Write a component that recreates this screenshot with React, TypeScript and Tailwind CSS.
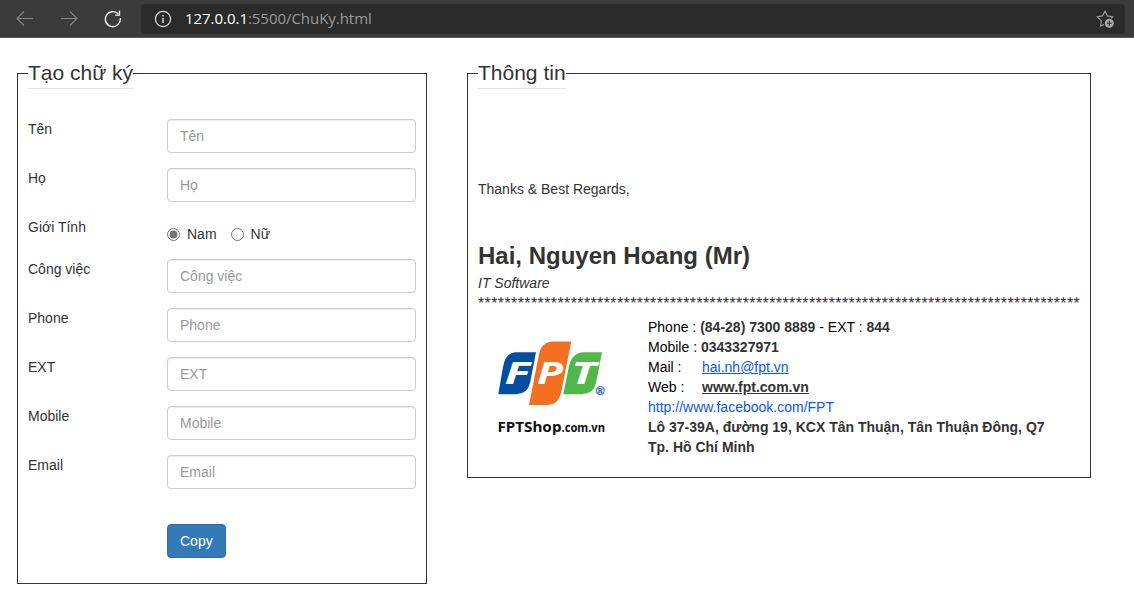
import React from "react";

function BrowserBar() {
  return (
    <header className="flex h-[38px] items-center border-b border-[#595959] bg-[#3b3b3b] pr-[9px]">
      <div className="flex w-[141px] shrink-0 items-center">
        <svg className="ml-4 h-[18px] w-[18px]" viewBox="0 0 18 18" fill="none" stroke="#858585" strokeWidth="1.1">
          <path d="M17 8.5H1.2M8 1.5l-7 7 7 7" />
        </svg>
        <svg className="ml-[26px] h-[18px] w-[18px]" viewBox="0 0 18 18" fill="none" stroke="#858585" strokeWidth="1.1">
          <path d="M1 8.5h15.8M10 1.5l7 7-7 7" />
        </svg>
        <svg className="ml-[26px] h-[18px] w-[18px]" viewBox="0 0 18 18" fill="none" stroke="#f2f2f2" strokeWidth="1.4">
          <path d="M16.3 8.2A7.5 7.5 0 1 1 14.3 4M15.5.8v4.3h-4.4" />
        </svg>
      </div>
      <div className="flex h-[30px] grow items-center rounded bg-[#2b2b2b] pl-[13px] pr-[11px]">
        <svg className="h-[18px] w-[18px]" viewBox="0 0 18 18" fill="none" stroke="#e0e0e0" strokeWidth="1.2">
          <circle cx="9" cy="9" r="7.6" />
          <path d="M9 8v5M9 5v1.6" strokeWidth="1.4" />
        </svg>
        <div className="mb-0.5 ml-[13px] grow font-['Open_Sans',sans-serif] text-[15px] leading-5 tracking-[-0.04px] text-[#9a9a9a]">
          <span className="text-white">127.0.0.1</span>:5500/ChuKy.html
        </div>
        <svg className="h-[18px] w-[18px]" viewBox="0 0 18 18" fill="none" stroke="#a0a0a0" strokeWidth="1.1">
          <path d="M8 14.4 4.6 16l.6-5.3L1.2 6.8l5.2-.9L9 1.2l2.4 4.7 5.3.9-1.6 1.6" />
          <circle cx="13.3" cy="13.2" r="4.5" fill="#a8a8a8" stroke="none" />
          <path d="M13.3 10.7v5M10.8 13.2h5" stroke="#2b2b2b" />
        </svg>
      </div>
    </header>
  );
}

function Panel({ title, className, children }: { title: string; className: string; children: React.ReactNode }) {
  return (
    <fieldset className={`border border-[#333] px-[10px] pt-[10px] ${className}`}>
      <legend className="mb-5 border-b border-[#e5e5e5] text-[21px] leading-[30px]">{title}</legend>
      {children}
    </fieldset>
  );
}

function Row({ label, children }: { label: string; children: React.ReactNode }) {
  return (
    <div className="mb-[15px] flex items-start">
      <span className="w-[139px] shrink-0">{label}</span>
      {children}
    </div>
  );
}

function Field({ label }: { label: string }) {
  return (
    <Row label={label}>
      <input
        type="text"
        placeholder={label}
        className="h-[34px] w-[249px] rounded border border-[#ccc] bg-white px-3 py-1.5 text-sm leading-5 shadow-[inset_0_1px_1px_rgba(0,0,0,0.075)] placeholder:text-[#999]"
      />
    </Row>
  );
}

function Logo() {
  return (
    <svg className="mt-[13px] ml-2.5 h-[120px] w-[120px]" viewBox="488 330 120 120">
      <path d="M515 352.300H536L530 383Q527.500 394 516 394.300H498.300L503 367Q505.500 353 515 352.300Z" fill="#034ea2" />
      <path d="M584 352.300H602L596 383Q593.500 394 582 394.300H563.300L569 366Q572 352.800 584 352.300Z" fill="#50b848" />
      <path d="M553 341.500H571.300L561 393Q558.500 404.500 548 405H529L539 354Q541.500 342 553 341.500Z" fill="#f37021" />
      <g fontFamily="Open Sans" fontWeight="bold" fontStyle="italic" fontSize="29.500" fill="#fff">
        <text x="504.500" y="383.800" textLength="25.500" lengthAdjust="spacingAndGlyphs">F</text>
        <text x="537" y="383.800" textLength="26" lengthAdjust="spacingAndGlyphs">P</text>
        <text x="571" y="383.800" textLength="25" lengthAdjust="spacingAndGlyphs">T</text>
      </g>
      <text x="595.800" y="394.600" fontFamily="Liberation Sans" fontSize="12" fontWeight="bold" fill="#4170b0" stroke="#4170b0" strokeWidth=".3">®</text>
      <text x="497.500" y="431.500" fontFamily="Noto Sans" fontWeight="bold" fontSize="15" textLength="64" lengthAdjust="spacingAndGlyphs" fill="#111">FPTShop</text>
      <text x="561.500" y="431.500" fontFamily="Noto Sans" fontWeight="bold" fontSize="11.500" textLength="43.500" lengthAdjust="spacingAndGlyphs" fill="#111">.com.vn</text>
    </svg>
  );
}

export default function App() {
  return (
    <div className="h-[603px] overflow-hidden bg-white font-['Liberation_Sans',Arial,sans-serif] text-sm leading-5 text-[#333]">
      <BrowserBar />
      <main className="flex items-start pl-[17px] pt-5">
        <Panel title="Tạo chữ ký" className="w-[410px] pb-[10px]">
          <Field label="Tên" />
          <Field label="Họ" />
          <Row label="Giới Tính">
            <div className="flex pt-[7px]">
              <label className="flex">
                <input type="radio" name="gender" defaultChecked className="mr-[7px] mt-1 h-[13px] w-[13px] accent-[#767676]" />
                Nam
              </label>
              <label className="ml-[14px] flex">
                <input type="radio" name="gender" className="mr-[7px] mt-1 h-[13px] w-[13px]" />
                Nữ
              </label>
            </div>
          </Row>
          <Field label="Công việc" />
          <Field label="Phone" />
          <Field label="EXT" />
          <Field label="Mobile" />
          <Field label="Email" />
          <div className="mt-[35px] mb-[15px] flex pl-[139px]">
            <button className="h-[34px] rounded border border-[#2e6da4] bg-[#337ab7] px-3 text-white">Copy</button>
          </div>
        </Panel>

        <Panel title="Thông tin" className="ml-10 w-[624px] pb-5">
          <p className="pt-[60px]">Thanks &amp; Best Regards,</p>
          <p className="mt-10 h-[34px] text-2xl leading-[34px] font-bold">Hai, Nguyen Hoang (Mr)</p>
          <p className="italic">IT Software</p>
          <p className="h-5 whitespace-nowrap text-[16px] leading-[22px] tracking-[0.391px]">{"*".repeat(91)}</p>
          <div className="mt-1 flex h-[140px]">
            <div className="w-[170px] shrink-0">
              <Logo />
            </div>
            <div className="text-black">
              <p>Phone : <b className="text-[#333]">(84-28) 7300 8889</b> - EXT : <b className="text-[#333]">844</b></p>
              <p>Mobile : <b className="text-[#333]">0343327971</b></p>
              <p className="flex"><span className="w-[54px]">Mail :</span><a className="text-[#0b57f0] underline">hai.nh@fpt.vn</a></p>
              <p className="flex"><span className="w-[54px]">Web :</span><b className="text-[#333] underline">www.fpt.com.vn</b></p>
              <p className="text-[#0b57f0]">http://www.facebook.com/FPT</p>
              <p className="font-bold text-[#333]">Lô 37-39A, đường 19, KCX Tân Thuận, Tân Thuận Đông, Q7</p>
              <p className="font-bold text-[#333]">Tp. Hồ Chí Minh</p>
            </div>
          </div>
        </Panel>
      </main>
    </div>
  );
}
